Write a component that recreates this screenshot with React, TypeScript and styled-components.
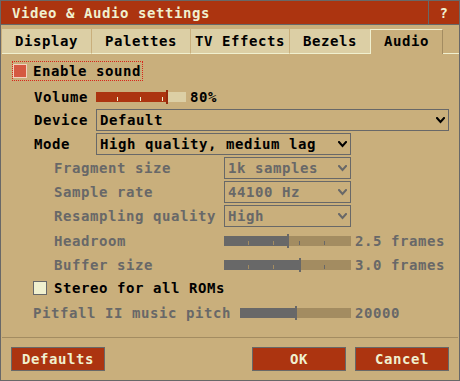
import styled, { createGlobalStyle } from "styled-components";

const gray = "#686868";
const tan = "#c9af7c";
const tanLo = "#a38c61";
const tabBg = "#dccfa5";
const cream = "#f0f0cf";
const red = "#ac3410";
const redHi = "#d55941";
const redDark = "#962a0c";

const GlobalStyle = createGlobalStyle`
  html, body {
    margin: 0;
    padding: 0;
    background: ${tan};
  }
  body {
    font-family: "DejaVu Sans Mono", "Liberation Mono", monospace;
    font-weight: bold;
    font-size: 14px;
    letter-spacing: 0.57px;
  }
`;

const Window = styled.div`
  width: 460px;
  height: 381px;
  box-sizing: border-box;
  border: 1px solid ${gray};
  background: ${tan};
  display: flex;
  flex-direction: column;
  overflow: hidden;
`;

const TitleBar = styled.div`
  height: 23px;
  border-bottom: 1px solid ${gray};
  background: ${red};
  color: ${cream};
  display: flex;
  align-items: center;
`;

const Title = styled.span`
  flex: 1;
  padding-left: 11px;
  white-space: pre;
`;

const HelpBox = styled.span`
  width: 30px;
  height: 100%;
  border-left: 1px solid ${gray};
  display: flex;
  align-items: center;
  justify-content: center;
`;

const TabBar = styled.div`
  display: flex;
  margin-top: 4px;
  padding-left: 1px;
  height: 25px;
`;

const Tab = styled.div<{ $w: number; $active?: boolean; $sep?: boolean }>`
  box-sizing: border-box;
  width: ${(p) => p.$w}px;
  flex: none;
  display: flex;
  align-items: center;
  justify-content: center;
  color: #000;
  background: ${(p) => (p.$active ? tan : tabBg)};
  border-right: ${(p) =>
    p.$active ? `1px solid ${tanLo}` : p.$sep ? `1px solid ${tan}` : "none"};
  border-bottom: ${(p) => (p.$active ? "none" : `1px solid ${cream}`)};
  border-top: ${(p) => (p.$active ? `1px solid ${cream}` : "none")};
  border-left: ${(p) => (p.$active ? `1px solid ${cream}` : "none")};
  padding-bottom: ${(p) => (p.$active ? 3 : 0)}px;
`;

const TabFiller = styled.div`
  flex: 1;
  border-bottom: 1px solid ${cream};
`;

const Row = styled.div<{ $top: number; $left: number }>`
  display: flex;
  align-items: center;
  height: 22px;
  margin: ${(p) => p.$top}px 0 0 ${(p) => p.$left}px;
`;

const FocusRow = styled.div`
  display: flex;
  align-items: center;
  align-self: flex-start;
  height: 20px;
  box-sizing: border-box;
  margin: 7px 0 0 11px;
  padding-right: 1px;
  border: 1px dotted #d8261a;
`;

const Label = styled.span<{ $w?: number; $off?: boolean }>`
  width: ${(p) => (p.$w ? `${p.$w}px` : "auto")};
  flex: none;
  white-space: pre;
  color: ${(p) => (p.$off ? gray : "#000")};
`;

const Check = styled.span<{ $on?: boolean }>`
  box-sizing: border-box;
  width: 14px;
  height: 14px;
  flex: none;
  margin-right: ${(p) => (p.$on ? 6 : 7)}px;
  border: 1px solid ${(p) => (p.$on ? "#f3d2bf" : gray)};
  background: ${(p) => (p.$on ? redHi : cream)};
`;

const SelectBox = styled.div<{ $w: number; $off?: boolean }>`
  box-sizing: border-box;
  width: ${(p) => p.$w}px;
  height: 22px;
  flex: none;
  border: 1px solid ${gray};
  display: flex;
  align-items: center;
  justify-content: space-between;
  padding: 0 3px 0 3px;
  color: ${(p) => (p.$off ? gray : "#000")};
  white-space: pre;
`;

const Track = styled.div<{ $w: number; $off?: boolean }>`
  position: relative;
  width: ${(p) => p.$w}px;
  height: 10px;
  flex: none;
  background: ${(p) => (p.$off ? tanLo : tabBg)};
`;

const Fill = styled.div<{ $off?: boolean }>`
  position: absolute;
  left: 0;
  top: 0;
  bottom: 0;
  background: ${(p) => (p.$off ? gray : red)};
`;

const Tick = styled.span<{ $color: string }>`
  position: absolute;
  top: 5px;
  bottom: 1px;
  width: 1px;
  background: ${(p) => p.$color};
`;

const Handle = styled.span<{ $off?: boolean }>`
  position: absolute;
  top: -2px;
  bottom: -2px;
  width: 2px;
  background: ${(p) => (p.$off ? gray : redDark)};
`;

const Value = styled.span<{ $off?: boolean }>`
  margin-left: 4px;
  white-space: pre;
  color: ${(p) => (p.$off ? gray : "#000")};
`;

const Separator = styled.div`
  height: 1px;
  margin: 13px 1px 0;
  background: ${tanLo};
`;

const Footer = styled.div`
  display: flex;
  margin-top: 9px;
  padding: 0 10px;
`;

const Button = styled.div<{ $gap?: number }>`
  box-sizing: border-box;
  width: 94px;
  height: 24px;
  border: 1px solid ${gray};
  background: ${red};
  color: ${cream};
  display: flex;
  align-items: center;
  justify-content: center;
  margin-left: ${(p) => p.$gap ?? 0}px;
`;

const Chevron = ({ off }: { off?: boolean }) => (
  <svg width="9" height="7" viewBox="0 0 9 7">
    <polyline
      points="1,1 4.5,5 8,1"
      fill="none"
      stroke={off ? gray : "#000"}
      strokeWidth="2"
      strokeLinecap="square"
    />
  </svg>
);

const Select = ({ w, text, off }: { w: number; text: string; off?: boolean }) => (
  <SelectBox $w={w} $off={off}>
    <span>{text}</span>
    <Chevron off={off} />
  </SelectBox>
);

const Slider = ({
  w,
  value,
  ticks,
  off,
}: {
  w: number;
  value: number;
  ticks: number;
  off?: boolean;
}) => {
  const pos = Math.round(value * (w - 2));
  const marks = Array.from({ length: ticks }, (_, i) =>
    Math.floor(((i + 1) * w) / (ticks + 1)) - 1
  );
  return (
    <Track $w={w} $off={off}>
      <Fill $off={off} style={{ width: pos }} />
      {marks.map((x) => (
        <Tick
          key={x}
          $color={x < pos ? (off ? tanLo : cream) : gray}
          style={{ left: x }}
        />
      ))}
      <Handle $off={off} style={{ left: pos }} />
    </Track>
  );
};

export default function App() {
  return (
    <>
      <GlobalStyle />
      <Window>
        <TitleBar>
          <Title>Video &amp; Audio settings</Title>
          <HelpBox>?</HelpBox>
        </TitleBar>

        <TabBar>
          <Tab $w={90} $sep>Display</Tab>
          <Tab $w={99} $sep>Palettes</Tab>
          <Tab $w={99} $sep>TV Effects</Tab>
          <Tab $w={80}>Bezels</Tab>
          <Tab $w={73} $active>Audio</Tab>
          <TabFiller />
        </TabBar>

        <FocusRow>
          <Check $on />
          <Label>Enable sound</Label>
        </FocusRow>

        <Row $top={5} $left={33}>
          <Label $w={62}>Volume</Label>
          <Slider w={90} value={0.8} ticks={3} />
          <Value>80%</Value>
        </Row>
        <Row $top={1} $left={33}>
          <Label $w={62}>Device</Label>
          <Select w={353} text="Default" />
        </Row>
        <Row $top={2} $left={33}>
          <Label $w={62}>Mode</Label>
          <Select w={255} text="High quality, medium lag" />
        </Row>
        <Row $top={2} $left={53}>
          <Label $w={170} $off>Fragment size</Label>
          <Select w={127} text="1k samples" off />
        </Row>
        <Row $top={2} $left={53}>
          <Label $w={170} $off>Sample rate</Label>
          <Select w={127} text="44100 Hz" off />
        </Row>
        <Row $top={2} $left={53}>
          <Label $w={170} $off>Resampling quality</Label>
          <Select w={127} text="High" off />
        </Row>
        <Row $top={3} $left={53}>
          <Label $w={170} $off>Headroom</Label>
          <Slider w={127} value={0.5} ticks={4} off />
          <Value $off>2.5 frames</Value>
        </Row>
        <Row $top={2} $left={53}>
          <Label $w={170} $off>Buffer size</Label>
          <Slider w={127} value={0.6} ticks={4} off />
          <Value $off>3.0 frames</Value>
        </Row>
        <Row $top={1} $left={32}>
          <Check />
          <Label>Stereo for all ROMs</Label>
        </Row>
        <Row $top={3} $left={32}>
          <Label $w={207} $off>Pitfall II music pitch</Label>
          <Slider w={111} value={0.5} ticks={0} off />
          <Value $off>20000</Value>
        </Row>

        <Separator />

        <Footer>
          <Button>Defaults</Button>
          <Button $gap={147}>OK</Button>
          <Button $gap={9}>Cancel</Button>
        </Footer>
      </Window>
    </>
  );
}
